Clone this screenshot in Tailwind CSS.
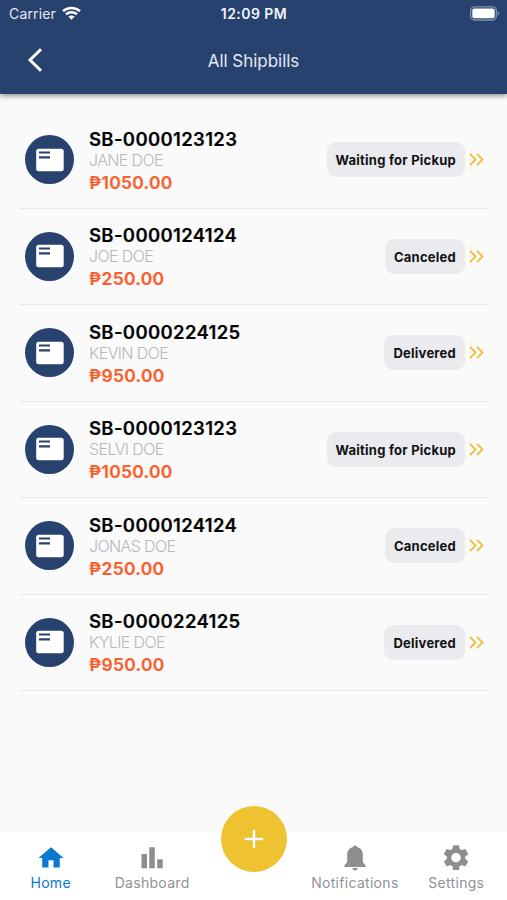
<!DOCTYPE html>
<html lang="en">
<head>
<meta charset="utf-8">
<title>All Shipbills</title>
<script src="https://cdn.jsdelivr.net/npm/@tailwindcss/browser@4"></script>
</head>
<body class="w-[507px] h-[900px] overflow-hidden bg-[#fafafa] font-['Inter','Liberation_Sans',sans-serif] flex flex-col">
<header class="relative z-10 h-[94px] shrink-0 bg-[#28426f] shadow-[0_2px_5px_rgba(0,0,0,0.42)] flex flex-col text-[#e3e9f3]">
  <div class="h-7 grid grid-cols-3 items-center pl-[8px] pr-[7px]">
    <div class="flex items-center gap-[6px] text-[14px] leading-7 tracking-[0.15px] pl-px">Carrier
      <svg class="w-[19px] h-[14px] -mt-[3px]" viewBox="0 0 19 14" fill="none" stroke="#fff" stroke-width="2.5"><path d="M1 5.2C5.8.8 13.2.8 18 5.2M4 8.3c3.2-2.9 7.8-2.9 11 0"/><path d="M9.500 13.700 6.300 10.600c1.800-1.600 4.600-1.600 6.400 0z" fill="#fff" stroke="none"/></svg>
    </div>
    <div class="text-center text-[14px] leading-7 font-semibold tracking-[0.45px] whitespace-nowrap text-[#f2f5fa]">12:09 PM</div>
    <svg class="w-[31px] h-[15px] justify-self-end -mt-[2px]" viewBox="0 0 31 15"><rect x="1.600" y=".8" width="25.800" height="13.200" rx="4" fill="none" stroke="#8192ae" stroke-width="1.300"/><rect x="3.300" y="2.500" width="22.400" height="9.800" rx="2" fill="#fff"/><path d="M28.700 5.300c2.200 1 2.200 3.400 0 4.400z" fill="#8192ae"/></svg>
  </div>
  <div class="h-[66px] grid grid-cols-3 items-center">
    <svg class="w-4 h-[26px] ml-[27px] -mt-[2px]" viewBox="0 0 16 26" fill="none" stroke="#fff" stroke-width="3"><path d="M14 2.200 3 13l11 10.800"/></svg>
    <h1 class="text-center text-[17px] font-normal whitespace-nowrap pt-px tracking-[-0.03px]">All Shipbills</h1>
  </div>
</header>
<main id="bills" class="flex-1 pt-[18px] pl-[20px] pr-[19px]"></main>
<nav class="relative h-[68px] shrink-0 bg-white grid grid-cols-5 text-center text-[14px] leading-5 text-[#929294] tracking-[0.3px]">
  <a class="flex flex-col items-center pt-[12px] text-[#0b78cf]"><svg class="w-[30px] h-[28px]" viewBox="0 0 24 24" preserveAspectRatio="none" fill="currentColor"><path d="M10 20v-6h4v6h5v-8h3L12 3 2 12h3v8z" transform="translate(0 -.3) scale(1 1.020)"/></svg><span class="pt-[1px]">Home</span></a>
  <a class="flex flex-col items-center pt-[12px]"><svg class="w-[30px] h-[28px]" viewBox="0 0 30 28" fill="#8e8e91"><path d="M4.500 10h5.500v14.300H4.500zM12.300 3.200h5.500v21.100h-5.500zM20.200 15.200h5.500v9.100h-5.500z"/></svg><span class="pt-[1px]">Dashboard</span></a>
  <button aria-label="Add" class="relative -top-[26px] left-px justify-self-center size-[66px] rounded-full bg-[#eec231] flex items-center justify-center"><svg class="size-5" viewBox="0 0 20 20" stroke="#fff" stroke-width="2.400"><path d="M10 .8v18.400M.8 10h18.400"/></svg></button>
  <a class="flex flex-col items-center pt-[12px]"><svg class="w-[30px] h-[28px]" viewBox="0 0 30 28" fill="#8e8e91"><path d="M13.200 3a1.900 1.900 0 0 1 3.700 0c3.800.9 5.900 3.600 5.900 7.600v7.600l2.700 3v1.700h-21v-1.700l2.700-3v-7.600c0-4 2.200-6.700 6-7.600zM12.500 24.100h5.200a2.600 2.300 0 0 1-5.200 0z"/></svg><span class="pt-[1px]">Notifications</span></a>
  <a class="flex flex-col items-center pt-[12px]"><svg class="w-[30px] h-[28px] overflow-visible" viewBox="0 0 24 24" fill="#8e8e91"><path transform="translate(-1.300 -1.600) scale(1.110)" d="M19.140 12.940c.04-.3.060-.61.060-.94 0-.32-.02-.64-.07-.94l2.030-1.580c.18-.14.230-.41.120-.61l-1.920-3.320c-.12-.22-.37-.29-.59-.22l-2.390.96c-.5-.38-1.030-.7-1.620-.94l-.36-2.540c-.04-.24-.24-.41-.48-.41h-3.840c-.24 0-.43.170-.47.410l-.36 2.540c-.59.240-1.130.570-1.620.940l-2.390-.96c-.22-.08-.47 0-.59.220L2.740 8.870c-.12.210-.08.470.12.610l2.030 1.580c-.05.300-.09.630-.09.940s.020.640.070.940l-2.030 1.580c-.18.140-.23.410-.12.610l1.920 3.320c.12.220.370.290.590.220l2.390-.96c.5.380 1.030.700 1.620.940l.36 2.540c.05.240.240.410.480.410h3.840c.24 0 .44-.17.470-.41l.36-2.540c.59-.24 1.130-.56 1.620-.94l2.390.96c.22.080.470 0 .59-.22l1.920-3.320c.12-.22.070-.47-.12-.61zM12 15.600c-1.980 0-3.600-1.620-3.600-3.600s1.620-3.600 3.600-3.600 3.600 1.620 3.600 3.600-1.620 3.600-3.600 3.600z"/></svg><span class="pt-[1px]">Settings</span></a>
</nav>
<script>
const bills = [
  ["SB-0000123123", "JANE DOE", "1050.00", "Waiting for Pickup"],
  ["SB-0000124124", "JOE DOE", "250.00", "Canceled"],
  ["SB-0000224125", "KEVIN DOE", "950.00", "Delivered"],
  ["SB-0000123123", "SELVI DOE", "1050.00", "Waiting for Pickup"],
  ["SB-0000124124", "JONAS DOE", "250.00", "Canceled"],
  ["SB-0000224125", "KYLIE DOE", "950.00", "Delivered"]
];
document.getElementById("bills").innerHTML = bills.map(([id, name, amount, status]) => `
<article class="h-[96.5px] border-b border-[#e8e8e9] flex items-center pl-[5px] pr-[4px]">
  <div class="size-[49px] rounded-full bg-[#28426f] flex items-center justify-center shrink-0">
    <svg class="w-[28px] h-[24px]" viewBox="0 0 28 24"><rect x=".2" y=".8" width="27.500" height="22.500" rx="2.500" fill="#fff"/><path d="M3 4.500h11M3 9.300h11" stroke="#28426f" stroke-width="2.200"/></svg>
  </div>
  <div class="ml-[15px] pt-[2px] flex-1 whitespace-nowrap">
    <h2 class="text-[18.5px] leading-[22px] font-semibold tracking-[0.34px] text-[#050505] [-webkit-text-stroke:0.2px]">${id}</h2>
    <p class="relative -top-px text-[16px] leading-[22px] font-light tracking-[-0.62px] text-[#b8b8ba]">${name}</p>
    <p class="text-[17.5px] leading-[22px] font-semibold tracking-[0.27px] text-[#fa602d] [-webkit-text-stroke:0.2px]">₱${amount}</p>
  </div>
  <span class="h-[35px] rounded-[9px] bg-[#e9ebee] px-[9px] pt-[2px] flex items-center text-[13px] font-bold tracking-[0.24px] whitespace-nowrap text-[#101113]">${status}</span>
  <svg class="ml-[4px] w-[15px] h-[13px]" viewBox="0 0 15 13" fill="none" stroke="#eec03c" stroke-width="1.900"><path d="m1 .9 5.500 5.600L1 12.100M8 .9l5.500 5.600L8 12.100"/></svg>
</article>`).join("");
</script>
</body>
</html>
